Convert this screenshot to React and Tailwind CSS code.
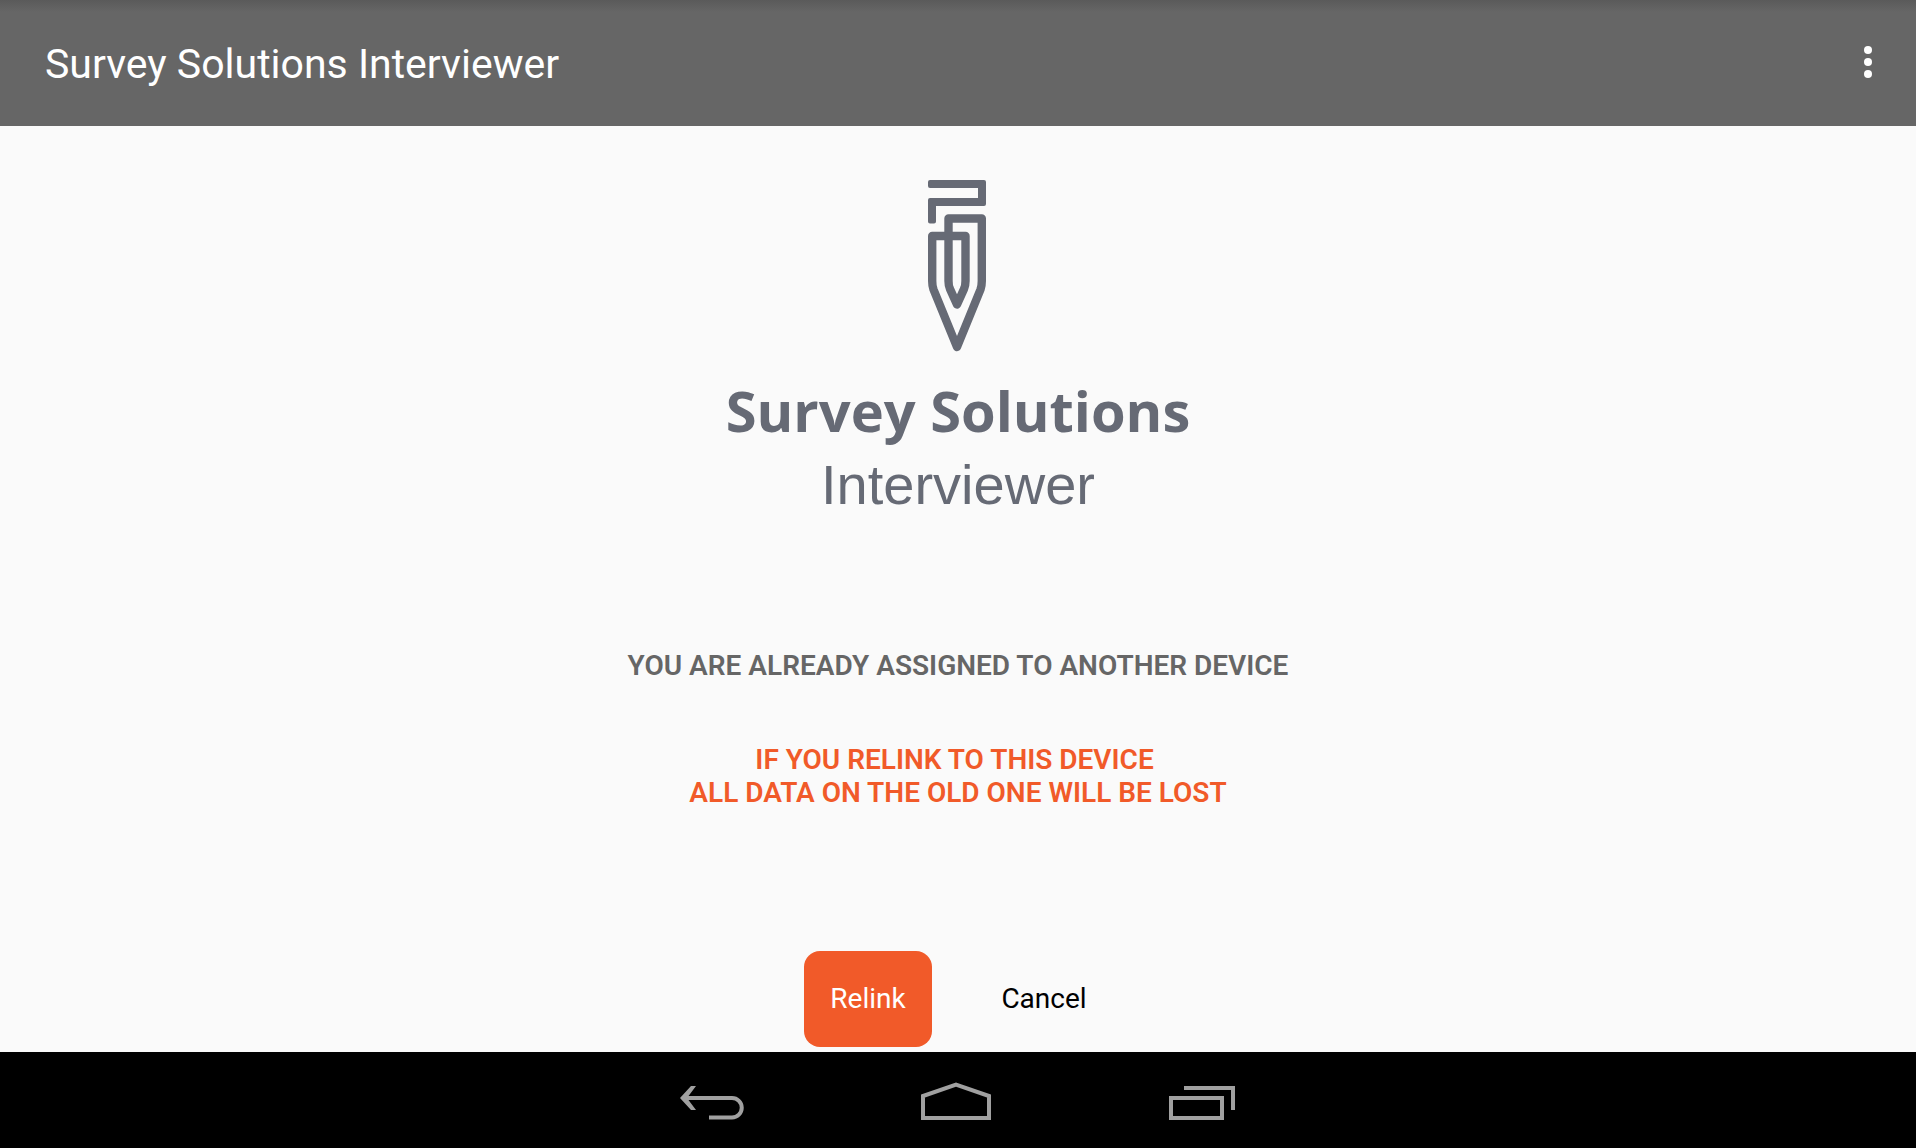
function PencilLogo() {
  return (
    <svg width="60" height="174" viewBox="0 0 60 174" strokeLinejoin="round" stroke="#666a75" role="img" aria-label="Survey Solutions logo">
      <path fill="#666a75" strokeWidth="4" d="M2 2H56V24H6V41.500H2V20H52V6H2Z" />
      <path fill="none" strokeWidth="8.400" d="M4.200 56H37.500V101Q37.500 106 36 109L29 124.500L22 109Q20.500 106 20.500 101V38.500H53.800V101Q53.800 106 52.500 109.500L29 167L5.500 109.500Q4.200 106 4.200 101Z" />
    </svg>
  );
}

function BackIcon() {
  return (
    <svg width="66" height="42" viewBox="0 0 66 42">
      <path d="M12 7H17L8 19L17 31H12L1 19Z" fill="#a0a0a0" />
      <path d="M6 19H53A9.600 9.600 0 0 1 53 38.500H30" fill="none" stroke="#a0a0a0" strokeWidth="4" />
    </svg>
  );
}

function HomeIcon() {
  return (
    <svg width="72" height="42" viewBox="0 0 72 42" fill="none" stroke="#a0a0a0" strokeWidth="4">
      <path d="M2 39V17L35 5.500L68 17V39Z" />
    </svg>
  );
}

function RecentsIcon() {
  return (
    <svg width="68" height="42" viewBox="0 0 68 42" fill="none" stroke="#a0a0a0" strokeWidth="4">
      <path d="M2 19H53V39H2ZM15 9H64V31" />
    </svg>
  );
}

export default function App() {
  return (
    <div className="flex min-h-screen flex-col bg-[#fafafa] font-[Roboto,sans-serif]">
      <header className="flex h-[126px] items-center justify-between bg-[#666666] bg-[linear-gradient(to_bottom,#5a5a5a,#666666_12px)] pr-8 pl-[45px]">
        <h1 className="pt-0.5 text-[41px] leading-[48px] text-white">Survey Solutions Interviewer</h1>
        <button aria-label="More options" className="flex flex-col gap-1 px-3 pt-3 pb-3.5">
          <span className="size-2 rounded-full bg-white" />
          <span className="size-2 rounded-full bg-white" />
          <span className="size-2 rounded-full bg-white" />
        </button>
      </header>

      <main className="flex flex-1 flex-col items-center pt-[54px] pb-[5px] text-center">
        <PencilLogo />
        <p className="mt-6 font-['Open_Sans',sans-serif] text-[56px] leading-[64px] font-bold text-[#666a75]">Survey Solutions</p>
        <p className="mt-[11px] font-['Liberation_Sans',sans-serif] text-[56px] leading-[64px] text-[#666a75]">Interviewer</p>
        <p className="mt-[132px] text-[28px] leading-[33px] font-semibold text-[#666666]">YOU ARE ALREADY ASSIGNED TO ANOTHER DEVICE</p>
        <p className="mt-[61px] text-[28px] leading-[33px] font-semibold whitespace-pre text-[#f15a29]">
          {"IF YOU RELINK TO THIS DEVICE \nALL DATA ON THE OLD ONE WILL BE LOST"}
        </p>
        <div className="mt-auto flex gap-11">
          <button className="h-24 w-32 rounded-2xl bg-[#f15a29] text-[28px] text-white">Relink</button>
          <button className="h-24 w-[136px] text-[28px] text-black">Cancel</button>
        </div>
      </main>

      <nav className="flex h-24 items-center justify-center gap-44 bg-black">
        <button aria-label="Back"><BackIcon /></button>
        <button aria-label="Home"><HomeIcon /></button>
        <button aria-label="Recent apps"><RecentsIcon /></button>
      </nav>
    </div>
  );
}
